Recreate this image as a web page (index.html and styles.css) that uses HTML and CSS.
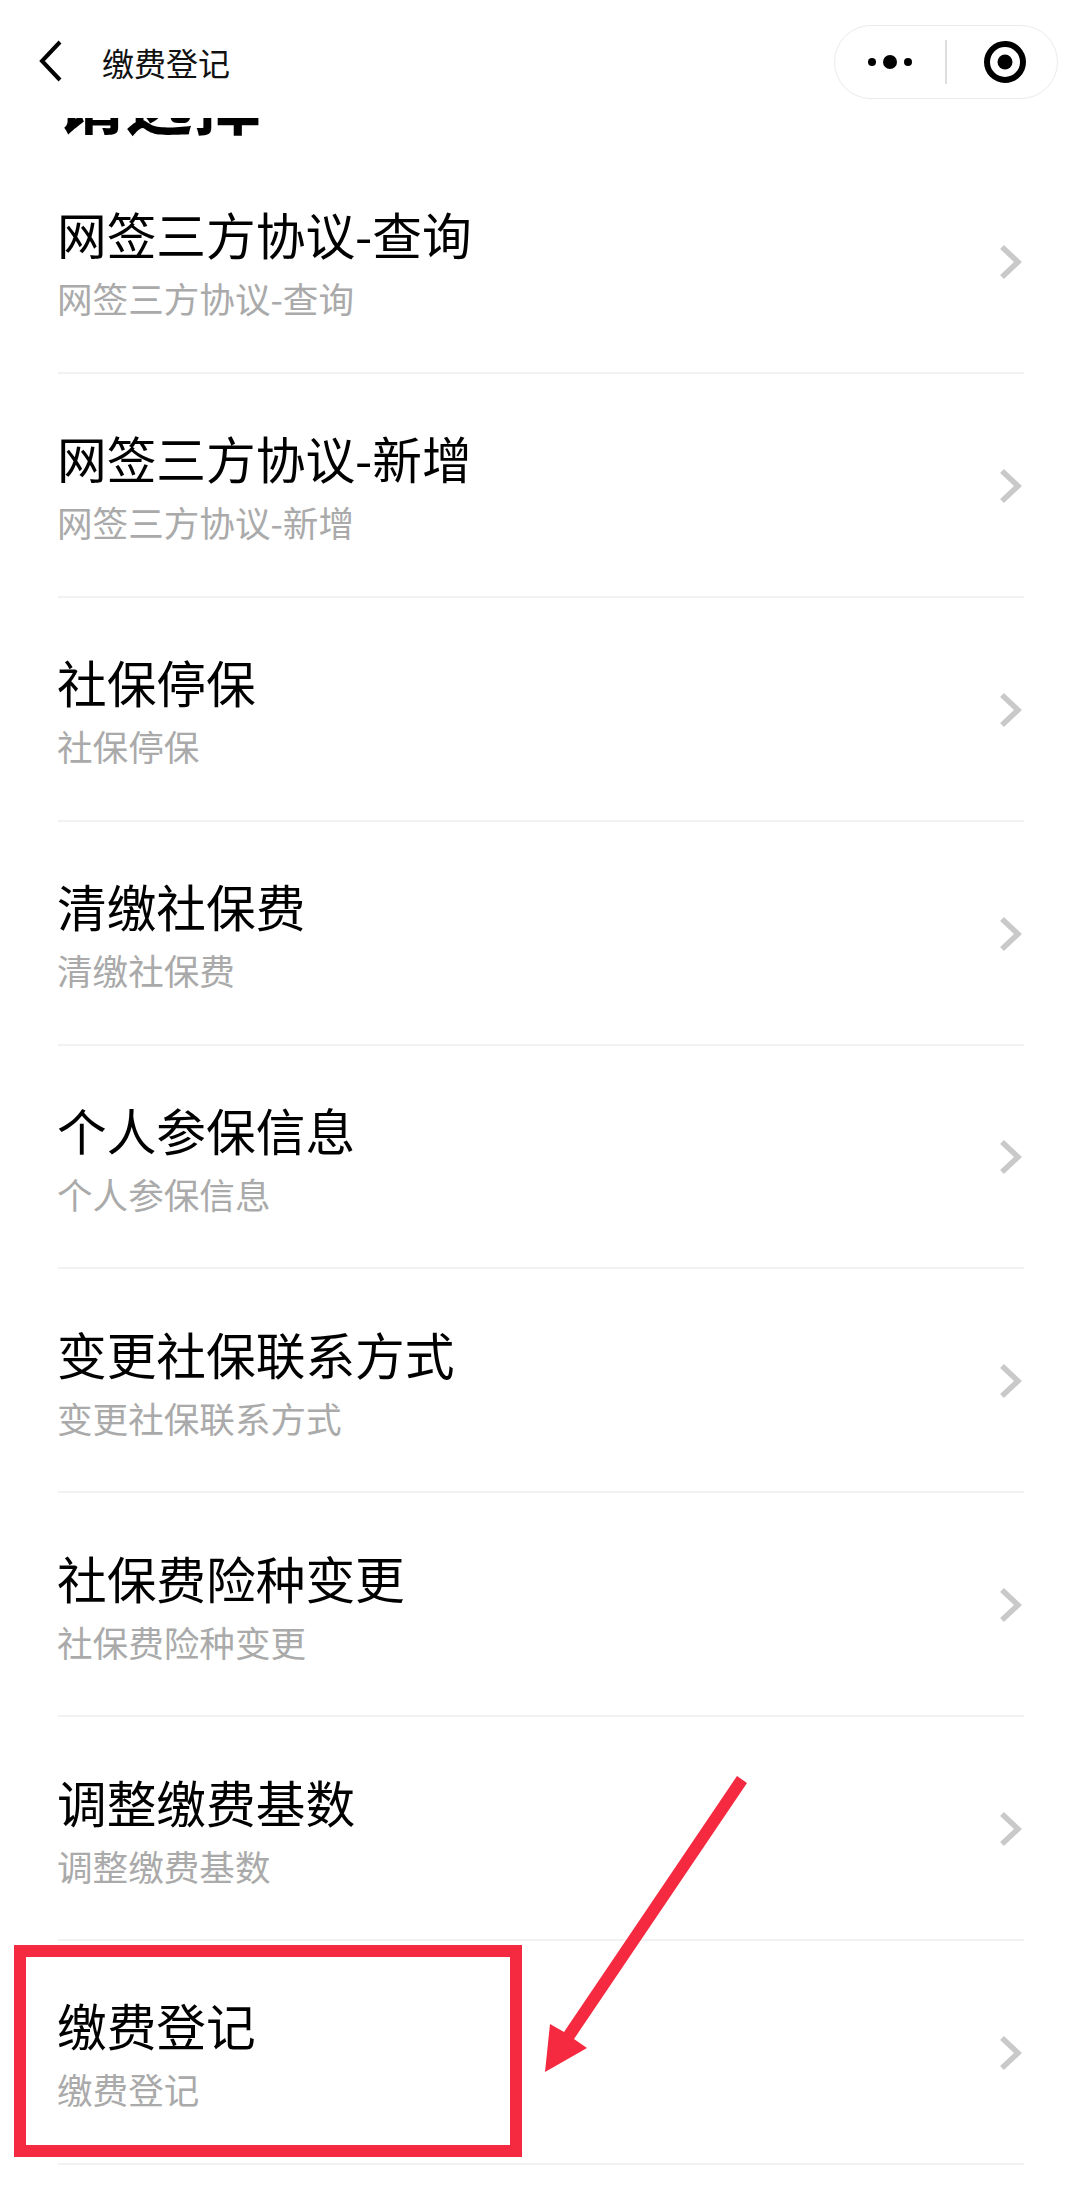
FILE: index.html
```html
<!DOCTYPE html>
<html lang="zh-CN">
<head>
<meta charset="utf-8">
<title>缴费登记</title>
<link rel="stylesheet" href="styles.css">
</head>
<body>
<div class="page">
  <header class="nav">
    <svg class="back" viewBox="0 0 24 42" aria-hidden="true"><path d="M21 2 L3 21 L21 40"/></svg>
    <div class="nav-title">缴费登记</div>
    <div class="capsule">
      <svg class="more" viewBox="0 0 44 14" aria-hidden="true"><circle cx="4" cy="7" r="4"/><circle cx="22" cy="7" r="7"/><circle cx="40" cy="7" r="4"/></svg>
      <span class="capsule-sep"></span>
      <svg class="target" viewBox="0 0 42 42" aria-hidden="true"><circle class="ring" cx="21" cy="21" r="18"/><circle cx="21" cy="21" r="7.5"/></svg>
    </div>
  </header>
  <main class="content">
    <h1 class="heading">请选择</h1>
    <ul class="list">
      <li class="row"><div class="texts"><div class="title">网签三方协议-查询</div><div class="sub">网签三方协议-查询</div></div><svg class="chev" viewBox="0 0 22 34" aria-hidden="true"><path d="M2 2 L18 17 L2 32"/></svg></li>
      <li class="row"><div class="texts"><div class="title">网签三方协议-新增</div><div class="sub">网签三方协议-新增</div></div><svg class="chev" viewBox="0 0 22 34" aria-hidden="true"><path d="M2 2 L18 17 L2 32"/></svg></li>
      <li class="row"><div class="texts"><div class="title">社保停保</div><div class="sub">社保停保</div></div><svg class="chev" viewBox="0 0 22 34" aria-hidden="true"><path d="M2 2 L18 17 L2 32"/></svg></li>
      <li class="row"><div class="texts"><div class="title">清缴社保费</div><div class="sub">清缴社保费</div></div><svg class="chev" viewBox="0 0 22 34" aria-hidden="true"><path d="M2 2 L18 17 L2 32"/></svg></li>
      <li class="row"><div class="texts"><div class="title">个人参保信息</div><div class="sub">个人参保信息</div></div><svg class="chev" viewBox="0 0 22 34" aria-hidden="true"><path d="M2 2 L18 17 L2 32"/></svg></li>
      <li class="row"><div class="texts"><div class="title">变更社保联系方式</div><div class="sub">变更社保联系方式</div></div><svg class="chev" viewBox="0 0 22 34" aria-hidden="true"><path d="M2 2 L18 17 L2 32"/></svg></li>
      <li class="row"><div class="texts"><div class="title">社保费险种变更</div><div class="sub">社保费险种变更</div></div><svg class="chev" viewBox="0 0 22 34" aria-hidden="true"><path d="M2 2 L18 17 L2 32"/></svg></li>
      <li class="row"><div class="texts"><div class="title">调整缴费基数</div><div class="sub">调整缴费基数</div></div><svg class="chev" viewBox="0 0 22 34" aria-hidden="true"><path d="M2 2 L18 17 L2 32"/></svg></li>
      <li class="row"><div class="texts"><div class="title">缴费登记</div><div class="sub">缴费登记</div></div><svg class="chev" viewBox="0 0 22 34" aria-hidden="true"><path d="M2 2 L18 17 L2 32"/></svg></li>
    </ul>
  </main>
  <svg class="annotation" viewBox="0 0 1080 2207" aria-hidden="true">
    <rect class="mark-box" x="20" y="1951" width="496" height="200"/>
    <polygon class="mark-arrow" points="737,1776 747,1783 574,2039 587,2048 545,2072 550,2024 564,2032"/>
  </svg>
</div>
</body>
</html>
```
FILE: styles.css
```css
* { box-sizing: border-box; }
html, body { margin: 0; padding: 0; background: #fff; }
body {
  font-family: "Noto Sans CJK SC", "Liberation Sans", sans-serif;
  color: #000;
}
.page {
  position: relative;
  width: 1080px;
  height: 2207px;
  overflow: hidden;
  background: #fff;
}
.nav {
  display: flex;
  align-items: center;
  height: 118px;
  padding: 6px 22px 0 39px;
  background: #fff;
}
.back {
  width: 24px;
  height: 42px;
  flex: none;
  fill: none;
  stroke: #000;
  stroke-width: 4;
  margin-top: -2px;
}
.nav-title {
  margin-left: 39px;
  font-size: 32px;
  line-height: 44px;
  color: #111;
}
.capsule {
  display: flex;
  align-items: center;
  margin: 0 0 0 auto;
  width: 224px;
  height: 74px;
  padding-left: 33px;
  border: 1.5px solid #ebebeb;
  border-radius: 37px;
}
.more { width: 44px; height: 14px; flex: none; fill: #000; }
.capsule-sep { width: 1.5px; height: 44px; margin-left: 33px; flex: none; background: #dedede; }
.target { width: 42px; height: 42px; flex: none; margin-left: 37.5px; fill: #000; }
.target .ring { fill: none; stroke: #000; stroke-width: 6; }
.content { height: 2089px; overflow: hidden; }
.heading {
  margin: -51px 0 0;
  padding-left: 57px;
  height: 83px;
  font-size: 68px;
  line-height: 66px;
  font-weight: 700;
}
.list { list-style: none; margin: 0 56px 0 58px; padding: 0; }
.row {
  display: flex;
  align-items: center;
  justify-content: space-between;
  height: 223.875px;
  padding-right: 2px;
  border-bottom: 2px solid #f2f2f2;
}
.texts { padding-top: 5px; margin-left: -1px; }
.title { font-size: 49.7px; line-height: 70px; color: #000; }
.sub { font-size: 35.6px; line-height: 60px; color: #aaa; }
.chev {
  width: 22px;
  height: 34px;
  flex: none;
  fill: none;
  stroke: #c9c9c9;
  stroke-width: 5.5;
  margin-top: 2px;
}
.annotation { position: absolute; left: 0; top: 0; width: 1080px; height: 2207px; }
.mark-box { fill: none; stroke: #f52a41; stroke-width: 12; }
.mark-arrow { fill: #f52a41; }
```
